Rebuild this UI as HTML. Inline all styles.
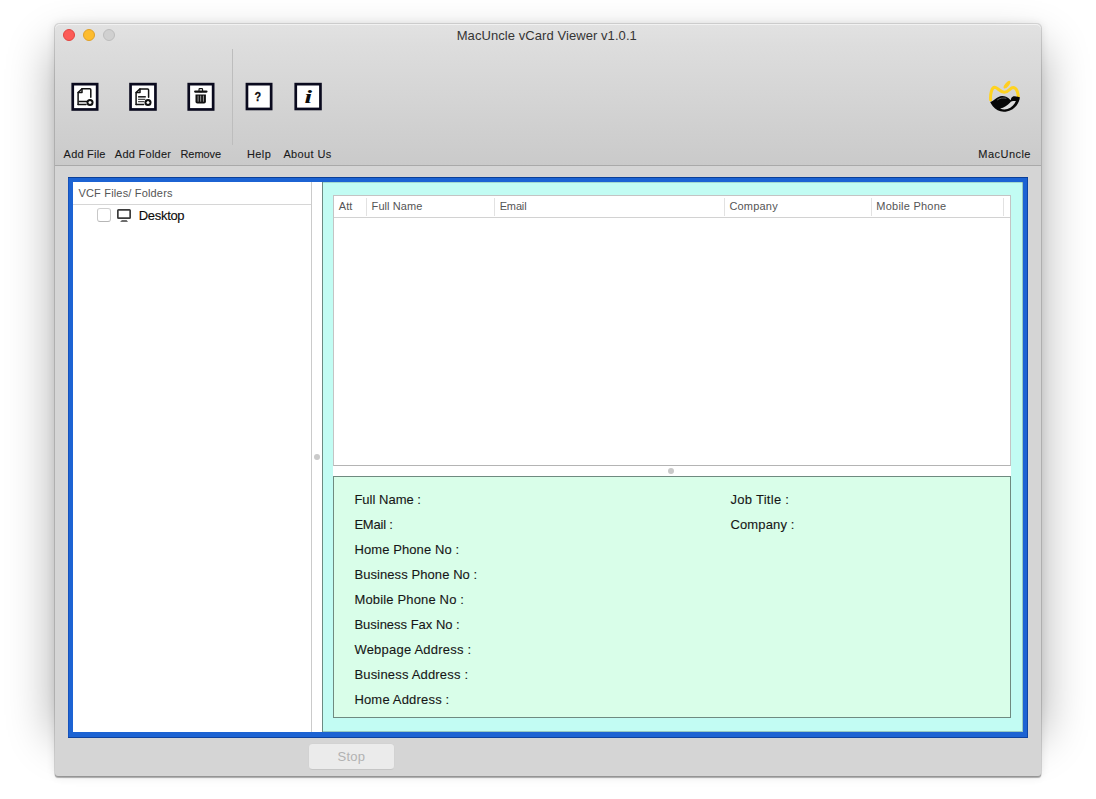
<!DOCTYPE html>
<html>
<head>
<meta charset="utf-8">
<title>MacUncle vCard Viewer v1.0.1</title>
<style>
html,body{margin:0;padding:0;}
body{width:1096px;height:799px;background:#fff;position:relative;overflow:hidden;font-family:"Liberation Sans",sans-serif;}
.abs{position:absolute;}
#tbc{position:absolute;left:0;top:0;width:988px;height:143px;}
#win{position:absolute;left:55px;top:24px;width:986px;height:752px;background:#d5d5d5;border-radius:4px 4px 3px 3px;
 box-shadow:0 0 0 1px rgba(0,0,0,0.11), 0 1.5px 1px rgba(0,0,0,0.30), 0 0 10px rgba(0,0,0,0.11);}
#sh{position:absolute;left:57px;top:50px;width:982px;height:684px;box-shadow:0 0 44px 3px rgba(0,0,0,0.33);}
#c{position:absolute;left:-1px;top:-1px;width:988px;height:754px;}
#tb{position:absolute;left:1px;top:1px;width:986px;height:141px;border-radius:5px 5px 0 0;
 background:linear-gradient(#e2e2e2,#dddddd 15%,#cacaca 100%);border-bottom:1px solid #a9a9a9;box-shadow:inset 0 1px 0 #f2f2f2;}
.tl{position:absolute;top:6px;width:12px;height:12px;border-radius:50%;box-sizing:border-box;}
.t{position:absolute;white-space:nowrap;line-height:1;}
.lbl{font-size:11px;color:#1a1a1a;top:125.5px;-webkit-text-stroke:0.1px #1a1a1a;}
#frame{position:absolute;left:14px;top:154px;width:960px;height:560.8px;background:#1c63d3;box-shadow:inset 0 1px 0 #0b3f98, inset -1px 0 0 #0f46a6, inset 0 -1px 0 #0d429e, inset 1px 0 0 #1552bb;}
#left{position:absolute;left:5px;top:5px;width:238px;height:550px;background:#fff;}
#split{position:absolute;left:243px;top:5px;width:12px;height:550px;background:#fff;}
#right{position:absolute;left:254px;top:5px;width:700.6px;height:550px;background:#c2fcf3;border-left:1px solid #6c8a82;box-sizing:border-box;box-shadow:inset -1px -1px 0 rgba(70,110,100,0.35), inset 0 1px 0 rgba(70,110,100,0.25);}
#table{position:absolute;left:10px;top:13px;width:678px;height:271px;box-sizing:border-box;background:#fff;border:1px solid #c4c4c4;border-bottom-color:#b4b4b4;}
#hsplit{position:absolute;left:10px;top:284px;width:678px;height:10px;background:#fff;}
#det{position:absolute;left:10px;top:294px;width:678px;height:242px;box-sizing:border-box;background:#d9fee9;border:1px solid #6f8a80;}
.th{font-size:11px;color:#555;top:4.7px;}
.sep{position:absolute;top:2px;width:1px;height:18px;background:#e2e2e2;}
.dl{font-size:13px;color:#161616;-webkit-text-stroke:0.1px #161616;}
</style>
</head>
<body>
<div id="sh"></div>
<div id="win"><div id="c">
 <div id="tb"></div>
 <div id="tbc">
  <div class="tl" style="left:9px;background:#fc5b57;border:1px solid #e2443f;"></div>
  <div class="tl" style="left:29px;background:#fdbc2e;border:1px solid #e0a028;"></div>
  <div class="tl" style="left:49px;background:#d0d0d0;border:1px solid #bdbdbd;"></div>
  <div class="t" id="title" style="letter-spacing:0.07px;left:402.7px;top:6px;font-size:13px;color:#353535;">MacUncle vCard Viewer v1.0.1</div>
  <div class="abs" style="left:178px;top:26px;width:1px;height:96px;background:#bdbdbd;"></div>

  <svg class="abs" style="left:17px;top:59px;" width="30" height="30" viewBox="0 0 30 30"><g transform="translate(0.40,0.8)"><rect x="1.35" y="1.35" width="24.40" height="25.30" fill="#fff" stroke="#0a0a1e" stroke-width="2.7"/><g fill="none" stroke="#121212" stroke-width="1.5" stroke-linejoin="round" stroke-linecap="round">
<path d="M6.7 21.6V9.7L10.6 6h7.8q1 0 1 1v7.4"/><path d="M6.7 9.7H10.6V6"/><path d="M6.7 21.6H14.6"/><path d="M7.8 18.6H15.6"/></g>
<circle cx="18.6" cy="19.7" r="3.5" fill="#111"/><path d="M18.6 18.2v3M17.1 19.7h3" stroke="#fff" stroke-width="1.4"/></g></svg>
  <svg class="abs" style="left:75px;top:59px;" width="30" height="30" viewBox="0 0 30 30"><g transform="translate(0.20,0.8)"><rect x="1.35" y="1.35" width="24.90" height="25.30" fill="#fff" stroke="#0a0a1e" stroke-width="2.7"/><g fill="none" stroke="#121212" stroke-width="1.5" stroke-linejoin="round" stroke-linecap="round">
<path d="M6.9 21.6V9.7L10.8 6.1h7.6q1 0 1 1v7.3"/><path d="M6.9 9.7H10.8V6.1"/><path d="M6.9 21.6H14.4"/></g>
<path d="M8.9 14H16.6" stroke="#222" stroke-width="1.6"/><path d="M8.9 16.5H16.2M8.9 18.9H15.2" stroke="#222" stroke-width="1"/>
<circle cx="18.8" cy="19.8" r="3.5" fill="#111"/><path d="M18.8 18.3v3M17.3 19.8h3" stroke="#fff" stroke-width="1.4"/></g></svg>
  <svg class="abs" style="left:133px;top:59px;" width="30" height="30" viewBox="0 0 30 30"><g transform="translate(0.40,0.8)"><rect x="1.35" y="1.35" width="24.40" height="25.30" fill="#fff" stroke="#0a0a1e" stroke-width="2.7"/><rect x="11.6" y="5.8" width="3.6" height="3" rx="0.8" fill="none" stroke="#111" stroke-width="1.1"/>
<path d="M7.8 8.8H19" stroke="#111" stroke-width="2.3" stroke-linecap="round"/>
<path d="M8.1 11.8H18.5V19q0 1.8-1.8 1.8H9.9q-1.8 0-1.8-1.8Z" fill="#111"/>
<path d="M10.7 12.8V18.9M13.3 12.8V18.9M16 12.8V18.9" stroke="#c4c4c4" stroke-width="0.8"/></g></svg>
  <svg class="abs" style="left:191px;top:59px;" width="30" height="30" viewBox="0 0 30 30"><g transform="translate(0.60,0.8)"><rect x="1.35" y="1.35" width="24.20" height="24.80" fill="#fff" stroke="#0a0a1e" stroke-width="2.7"/><g transform="translate(12.3,17.9) scale(0.86,1)"><text x="0" y="0" text-anchor="middle" font-family="Liberation Sans, sans-serif" font-weight="bold" font-size="12.6" fill="#0c0c0c" stroke="#0c0c0c" stroke-width="0.25">?</text></g></g></svg>
  <svg class="abs" style="left:240px;top:59px;" width="30" height="30" viewBox="0 0 30 30"><g transform="translate(0.40,0.8)"><rect x="1.35" y="1.35" width="24.70" height="24.80" fill="#fff" stroke="#0a0a1e" stroke-width="2.7"/><g transform="translate(13.8,19.9) scale(1.42,1)"><text x="0" y="0" text-anchor="middle" font-family="Liberation Serif, serif" font-weight="bold" font-style="italic" font-size="19.2" fill="#0c0c0c">i</text></g></g></svg>
  <svg class="abs" style="left:926px;top:51px;" width="50" height="44" viewBox="980 74 50 44">
<path d="M990.6 100C990.2 93.4 991.8 87.4 994.7 87.3C997.8 87.3 1000 92.3 1004.3 92.3C1008.5 92.3 1010.2 87.5 1013.1 87.5C1016 87.6 1017.8 92 1018.3 96.2" fill="none" stroke="#ffd320" stroke-width="3" stroke-linecap="round" stroke-linejoin="round"/>
<ellipse cx="1007" cy="84.7" rx="4.7" ry="1.95" transform="rotate(-50 1007 84.7)" fill="#ffce22"/>
<path d="M990.2 102.1C994 101.2 997 96.2 1002 96C1005 95.9 1007.3 97.2 1008.6 98.3C1009.6 99.1 1010.3 99.9 1010.8 100.3C1010.9 98.4 1011.6 97 1013.4 96.3C1015.6 95.6 1017.8 97.4 1019.9 97.3C1019.6 100.4 1018.4 103 1016.6 105.4C1013.6 109.2 1009 111.7 1003.7 111.7C999.4 111.7 995.6 109.6 992.8 106.2C991.6 104.8 990.8 103.4 990.2 102.1Z" fill="#060606"/>
<path d="M1000.1 108.5C1004 107.6 1007.6 105.2 1010.2 102.4C1011 101.6 1011.6 101.2 1013 101.1C1014 101 1015 101 1015.9 100.9C1014.6 104.4 1011.6 107.6 1007.4 109.1C1004.8 109.9 1002.2 109.6 1000.1 108.5Z" fill="#dbdbdb"/>
<path d="M997.2 100C999.4 98.2 1003.2 97.5 1006.4 98.3" stroke="#9a9a9a" stroke-width="0.6" fill="none"/>
</svg>
  <div class="t lbl" id="l1" style="letter-spacing:0.22px;left:9.6px;">Add File</div>
  <div class="t lbl" id="l2" style="letter-spacing:0.27px;left:60.8px;">Add Folder</div>
  <div class="t lbl" id="l3" style="letter-spacing:-0.09px;left:126.5px;">Remove</div>
  <div class="t lbl" id="l4" style="letter-spacing:0.39px;left:193px;">Help</div>
  <div class="t lbl" id="l5" style="letter-spacing:0.38px;left:229.4px;">About Us</div>
  <div class="t lbl" id="l6" style="letter-spacing:0.47px;left:924.3px;">MacUncle</div>
 </div>

 <div id="frame">
  <div id="left">
   <div class="t" id="vcf" style="letter-spacing:0.17px;left:5.5px;top:6.2px;font-size:11px;color:#555;">VCF Files/ Folders</div>
   <div class="abs" style="left:0;top:22px;width:238px;height:1px;background:#d6d6d6;"></div>
   <div class="abs" style="left:24px;top:26px;width:14px;height:14px;box-sizing:border-box;border:1px solid #c8c8c8;border-top-color:#d0d0d0;border-bottom-color:#b6b6b6;border-radius:3px;background:#fff;"></div>
   <svg class="abs" style="left:44px;top:27px;" width="15" height="14" viewBox="0 0 15 14"><rect x="0.85" y="0.85" width="12.3" height="8.25" rx="0.7" fill="#fff" stroke="#3c3c3c" stroke-width="1.7"/><path d="M4.9 11.2h4.7l1.4 1.55H3.1Z" fill="#3c3c3c"/></svg>
   <div class="t" id="desk" style="letter-spacing:-0.32px;left:65.8px;top:27px;font-size:13px;color:#0a0a0a;-webkit-text-stroke:0.12px #0a0a0a;">Desktop</div>
  </div>
  <div id="split">
   <div class="abs" style="left:0;top:0;width:1.4px;height:550px;background:#cbcbcb;"></div>
   <div class="abs" style="left:3px;top:272px;width:6px;height:6px;border-radius:50%;background:#cacaca;"></div>
  </div>
  <div id="right">
   <div id="table">
    <div class="abs" style="left:0;top:21px;width:676px;height:1px;background:#d2d2d2;"></div>
    <div class="sep" style="left:32px;"></div>
    <div class="sep" style="left:160px;"></div>
    <div class="sep" style="left:390px;"></div>
    <div class="sep" style="left:537px;"></div>
    <div class="sep" style="left:669px;"></div>
    <div class="t th" id="h1" style="letter-spacing:0.07px;left:4.8px;">Att</div>
    <div class="t th" id="h2" style="letter-spacing:0.07px;left:37.6px;">Full Name</div>
    <div class="t th" id="h3" style="letter-spacing:-0.15px;left:165.7px;">Email</div>
    <div class="t th" id="h4" style="letter-spacing:0.2px;left:395.4px;">Company</div>
    <div class="t th" id="h5" style="letter-spacing:0.24px;left:542.3px;">Mobile Phone</div>
   </div>
   <div id="hsplit"><div class="abs" style="left:335px;top:2px;width:6px;height:6px;border-radius:50%;background:#c9c9c9;"></div></div>
   <div id="det">
    <div class="t dl" id="d1" style="letter-spacing:0.01px;left:20.4px;top:15.6px;">Full Name :</div>
    <div class="t dl" id="d2" style="letter-spacing:-0.21px;left:20.4px;top:40.6px;">EMail :</div>
    <div class="t dl" id="d3" style="letter-spacing:0.1px;left:20.4px;top:65.6px;">Home Phone No :</div>
    <div class="t dl" id="d4" style="letter-spacing:0.08px;left:20.4px;top:90.6px;">Business Phone No :</div>
    <div class="t dl" id="d5" style="letter-spacing:0.16px;left:20.4px;top:115.6px;">Mobile Phone No :</div>
    <div class="t dl" id="d6" style="letter-spacing:-0.01px;left:20.4px;top:140.6px;">Business Fax No :</div>
    <div class="t dl" id="d7" style="letter-spacing:0.22px;left:20.4px;top:165.6px;">Webpage Address :</div>
    <div class="t dl" id="d8" style="letter-spacing:0.18px;left:20.4px;top:190.6px;">Business Address :</div>
    <div class="t dl" id="d9" style="letter-spacing:0.18px;left:20.4px;top:215.6px;">Home Address :</div>
    <div class="t dl" id="d10" style="letter-spacing:0.29px;left:396.4px;top:15.6px;">Job Title :</div>
    <div class="t dl" id="d11" style="letter-spacing:0.15px;left:396.4px;top:40.6px;">Company :</div>
   </div>
  </div>
 </div>

 <div class="abs" id="stop" style="left:253.5px;top:719.7px;width:87px;height:27.8px;box-sizing:border-box;border:1px solid #d2d2d2;border-bottom-color:#c5c5c5;border-radius:4.5px;background:#ebebeb;">
  <div class="t" id="stopt" style="letter-spacing:0.22px;left:29px;top:6px;font-size:13px;color:#b2b2b2;">Stop</div>
 </div>
</div></div>
</body>
</html>
